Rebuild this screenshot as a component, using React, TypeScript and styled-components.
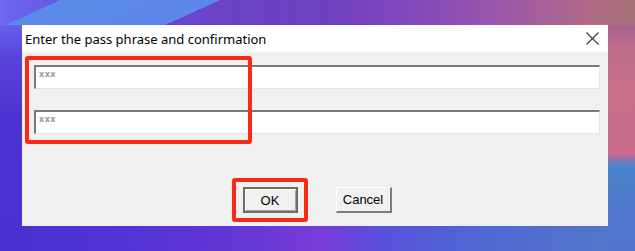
import React from "react";
import styled, { createGlobalStyle } from "styled-components";

const Global = createGlobalStyle`
  html, body { margin: 0; padding: 0; }
  body { width: 635px; height: 251px; overflow: hidden; }
`;

const Desktop = styled.div`
  width: 635px;
  height: 251px;
  box-sizing: border-box;
  padding: 25px 27px 25px 22px;
  background-color: #5038d6;
  background-repeat: no-repeat;
  background-image:
    linear-gradient(155.6deg, rgba(0,0,0,0) 0px, rgba(0,0,0,0) 25px, #5b8ae8 25px, #5d86ea 91px, rgba(0,0,0,0) 91px),
    linear-gradient(180deg, #a66290 0px, #bc6c8a 20px, #c8708a 60px, #c86c8a 118px, #d06890 128px, #4b84c8 140px, #4f78cc 180px, #5272cc 226px),
    linear-gradient(90deg, #7068f0 0px, #6a60ec 20px, #6a42c8 220px, #7040c2 330px, #8a4cb8 440px, #a05aa2 520px, #b06a88 590px, #a87278 635px),
    linear-gradient(180deg, #6a60ec 0px, #5a44dc 30px, #4c34d2 90px, #4a32d0 200px),
    linear-gradient(90deg, #4a30d0 0px, #5434d4 140px, #6838d6 260px, #7a3cd6 320px, #5a50da 380px, #4f64d6 460px, #5270cc 560px, #5478c8 635px);
  background-size: 635px 25px, 27px 226px, 635px 25px, 22px 226px, 635px 25px;
  background-position: 0 0, 608px 25px, 0 0, 0 25px, 0 226px;
`;

const Dialog = styled.div`
  position: relative;
  width: 586px;
  height: 201px;
  background: #f0f0f0;
  display: flex;
  flex-direction: column;
`;

const TitleBar = styled.div`
  height: 27px;
  background: #ffffff;
  display: flex;
  align-items: center;
  justify-content: space-between;
  padding: 0 9px 0 3px;
  flex-shrink: 0;
`;

const Title = styled.span`
  font-family: "Noto Sans", "Open Sans", sans-serif;
  font-size: 13px;
  color: #000;
  margin-top: 1px;
`;

const CloseButton = styled.div`
  width: 14px;
  height: 14px;
  display: flex;
  align-items: center;
  justify-content: center;
`;

const Body = styled.div`
  position: relative;
  flex: 1;
  display: flex;
  flex-direction: column;
  padding: 13px 8px 0 12px;
`;

const Fields = styled.div`
  display: flex;
  flex-direction: column;
  gap: 21px;
`;

const Field = styled.div`
  height: 24px;
  box-sizing: border-box;
  background: #ffffff;
  border-top: 2px solid #7a7a7a;
  border-left: 2px solid #7a7a7a;
  border-right: 1px solid #e4e4e4;
  border-bottom: 1px solid #e4e4e4;
  padding: 3px 3px;
  font-family: "DejaVu Sans", sans-serif;
  font-size: 8px;
  font-weight: bold;
  color: #9a9a9a;
  line-height: 9px;
  letter-spacing: 0.5px;
`;

const Highlight = styled.div<{ $top: number; $left: number; $w: number; $h: number }>`
  position: absolute;
  top: ${(p) => p.$top}px;
  left: ${(p) => p.$left}px;
  width: ${(p) => p.$w}px;
  height: ${(p) => p.$h}px;
  box-sizing: border-box;
  border: 4px solid #fb2a16;
  border-radius: 3px;
  pointer-events: none;
`;

const ButtonRow = styled.div`
  display: flex;
  justify-content: center;
  gap: 38px;
  margin-top: 53px;
`;

const ButtonWrap = styled.div`
  position: relative;
`;

const Button = styled.button<{ $default?: boolean }>`
  width: ${(p) => (p.$default ? "55px" : "56px")};
  height: 26px;
  box-sizing: border-box;
  background: #f0f0f0;
  font-family: "Liberation Sans", Arial, sans-serif;
  font-size: 13px;
  color: #000;
  padding: 0;
  margin: 0;
  border-radius: 0;
  border-style: solid;
  border-width: ${(p) => (p.$default ? "2px" : "1px 2px 2px 1px")};
  border-color: ${(p) =>
    p.$default ? "#6b6b6b" : "#ffffff #7c7c7c #7c7c7c #ffffff"};
  box-shadow: ${(p) => (p.$default ? "inset 1px 1px 0 #ffffff, inset -1px -1px 0 #a0a0a0" : "none")};
`;

export default function App() {
  return (
    <>
      <Global />
      <Desktop>
        <Dialog>
          <TitleBar>
            <Title>Enter the pass phrase and confirmation</Title>
            <CloseButton>
              <svg width="13" height="13" viewBox="0 0 13 13">
                <path d="M0.5 0.5 L12.5 12.5 M12.5 0.5 L0.5 12.5" stroke="#3a3a3a" strokeWidth="1.1" fill="none" />
              </svg>
            </CloseButton>
          </TitleBar>
          <Body>
            <Fields>
              <Field>xxx</Field>
              <Field>xxx</Field>
            </Fields>
            <Highlight $top={4} $left={3} $w={227} $h={88} />
            <ButtonRow>
              <ButtonWrap>
                <Button $default>OK</Button>
                <Highlight $top={-9} $left={-11} $w={76} $h={44} />
              </ButtonWrap>
              <Button>Cancel</Button>
            </ButtonRow>
          </Body>
        </Dialog>
      </Desktop>
    </>
  );
}
